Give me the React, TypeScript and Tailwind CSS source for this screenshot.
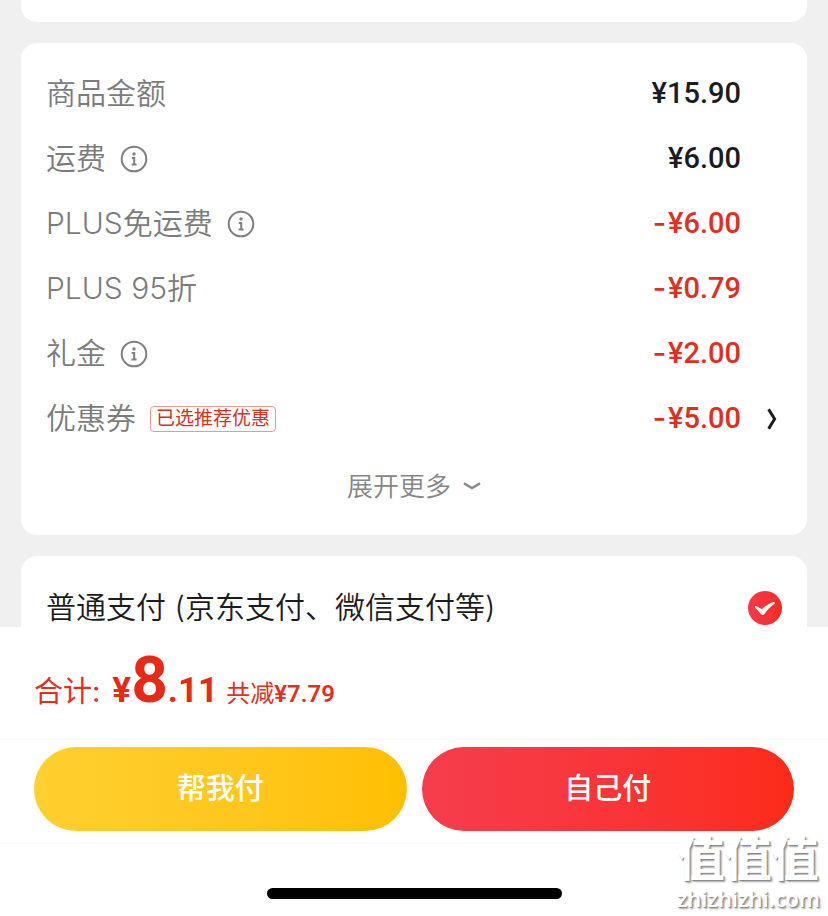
import { useState } from 'react'

type Row = {
  label: string
  amount: string
  discount?: boolean
  info?: boolean
  tag?: string
  link?: boolean
}

const ROWS: Row[] = [
  { label: '商品金额', amount: '¥15.90' },
  { label: '运费', amount: '¥6.00', info: true },
  { label: 'PLUS免运费', amount: '¥6.00', discount: true, info: true },
  { label: 'PLUS 95折', amount: '¥0.79', discount: true },
  { label: '礼金', amount: '¥2.00', discount: true, info: true },
  {
    label: '优惠券',
    amount: '¥5.00',
    discount: true,
    tag: '已选推荐优惠',
    link: true,
  },
]

function InfoIcon() {
  return (
    <svg
      viewBox="0 0 28 28"
      className="size-7"
      fill="none"
      stroke="#808080"
      strokeWidth="2"
    >
      <circle cx="14" cy="14" r="12.3" />
      <circle cx="14" cy="8.9" r="1.7" fill="#808080" stroke="none" />
      <path d="M11.8 12.9h2.4v6.2M11.6 19.4h5" />
    </svg>
  )
}

function PriceRow({ row }: { row: Row }) {
  return (
    <li className="flex h-[65px] items-center">
      <span className="text-[30px] font-[350] text-[#7c7c7c]">{row.label}</span>
      {row.info && (
        <button type="button" aria-label={`${row.label}说明`} className="ml-3.5">
          <InfoIcon />
        </button>
      )}
      {row.tag && (
        <span className="ml-3.5 rounded border border-[#e89a90] px-[5px] text-[19px] leading-6 text-[#d6301f]">
          {row.tag}
        </span>
      )}
      <span
        className={`ml-auto font-[Roboto,sans-serif] text-[29px] font-medium ${
          row.discount ? 'text-[#dc3020]' : 'text-[#1c1c1e]'
        }`}
      >
        {row.discount && <span className="mr-0.5 font-[Inter,sans-serif]">-</span>}
        {row.amount}
      </span>
      <span className="flex w-9 justify-end">
        {row.link && (
          <button type="button" aria-label={row.label}>
            <svg
              viewBox="0 0 10 22"
              className="h-[22px] w-2.5"
              fill="none"
              stroke="#1c1c1e"
              strokeWidth="3"
            >
              <path d="M1.6 1.2 7.6 11l-6 9.8" />
            </svg>
          </button>
        )}
      </span>
    </li>
  )
}

function PayMethod() {
  const [checked, setChecked] = useState(true)

  return (
    <label className="flex items-center justify-between">
      <span className="text-[30px] font-[350] text-[#1c1c1e]">
        普通支付 (京东支付、微信支付等)
      </span>
      <span className="relative size-[34px]">
        <input
          type="checkbox"
          checked={checked}
          onChange={(e) => setChecked(e.target.checked)}
          className="block size-[34px] appearance-none rounded-full border border-neutral-300 checked:border-0 checked:bg-linear-to-r checked:from-[#f23a4a] checked:to-[#fb2a20]"
        />
        {checked && (
          <svg
            viewBox="0 0 34 34"
            className="pointer-events-none absolute inset-0"
            fill="#fff"
          >
            <path d="M7 16.6c-.5-1.1.5-1.9 1.6-1.4l5.3 3c3.4-3.3 6.9-5.5 11.3-7.1 1.4-.4 2.2.7 1.3 1.6-4.2 3.1-7.2 6.1-10.1 10.3-.9 1.300-2.200 1.300-3.200.2z" />
          </svg>
        )}
      </span>
    </label>
  )
}

function Watermark() {
  return (
    <div className="pointer-events-none absolute right-2 bottom-1 text-center text-white">
      <p className="text-[47px] leading-[50px] font-bold [text-shadow:1px_1px_1px_#888,2px_2px_2px_#aaa]">
        值值值
      </p>
      <p className="font-['Open_Sans',sans-serif] text-[22px] leading-7 font-semibold [text-shadow:1px_1px_1px_#888,2px_2px_2px_#aaa]">
        zhizhizhi.com
      </p>
    </div>
  )
}

export default function App() {
  return (
    <div className="relative flex h-screen flex-col bg-[#f0f0f0] font-[Inter,'Noto_Sans_CJK_SC',sans-serif]">
      <main className="min-h-0 flex-1 space-y-[21px] overflow-hidden px-[21px]">
        <section className="h-[22px] rounded-b-2xl bg-white" />

        <section className="rounded-2xl bg-white pt-[18px] pb-3.5">
          <ul className="pr-[30px] pl-[25px]">
            {ROWS.map((row) => (
              <PriceRow key={row.label} row={row} />
            ))}
          </ul>
          <button
            type="button"
            className="flex h-[70px] w-full items-center justify-center gap-3 text-[26px] font-[350] text-[#868686]"
          >
            展开更多
            <svg
              viewBox="0 0 18 8"
              className="h-2 w-[18px]"
              fill="none"
              stroke="#8c8c8c"
              strokeWidth="2.4"
            >
              <path d="M1 1.4 9 6l8-4.6" />
            </svg>
          </button>
        </section>

        <section className="rounded-2xl bg-white px-[25px] py-[29px]">
          <PayMethod />
        </section>
      </main>

      <footer className="bg-white">
        <p className="flex h-28 items-baseline px-[34px] pt-1.5 text-[#e1301e]">
          <span className="text-[29px]">合计:</span>
          <span className="ml-3 font-[Roboto,sans-serif] text-[35px] font-bold text-[#e62a17]">
            ¥<span className="text-[64px]">8</span>.11
          </span>
          <span className="ml-2 text-[24px]">
            共减
            <span className="font-[Roboto,sans-serif] font-semibold">¥7.79</span>
          </span>
        </p>

        <div className="flex gap-[15px] border-y border-[#fafafa] px-[34px] pt-[7px] pb-3 text-[29px] font-medium text-white">
          <button
            type="button"
            className="h-[84px] flex-1 rounded-full bg-linear-to-r from-[#ffd02f] to-[#ffbf00]"
          >
            帮我付
          </button>
          <button
            type="button"
            className="h-[84px] flex-1 rounded-full bg-linear-to-r from-[#f53d4d] to-[#fc2b18]"
          >
            自己付
          </button>
        </div>

        <div className="flex justify-center pt-11 pb-[17px]">
          <div className="h-[11px] w-[295px] rounded-full bg-black" />
        </div>
      </footer>

      <Watermark />
    </div>
  )
}
